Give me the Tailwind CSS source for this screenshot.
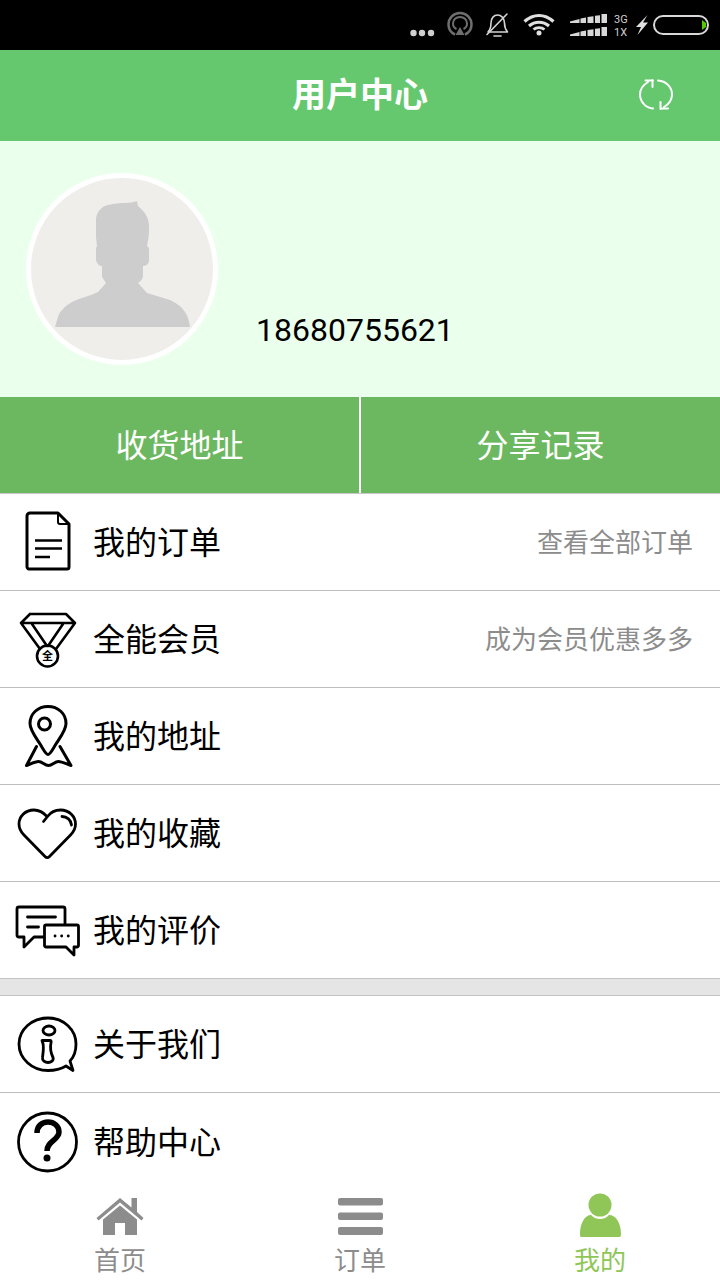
<!DOCTYPE html>
<html lang="zh">
<head>
<meta charset="utf-8">
<script src="https://cdn.jsdelivr.net/npm/@tailwindcss/browser@4"></script>
</head>
<body class="m-0">
<div class="w-[720px] h-[1280px] flex flex-col overflow-hidden bg-white font-['Noto_Sans_CJK_SC','Noto_Sans',sans-serif]">
  <!-- status bar -->
  <div class="h-[50px] bg-black flex justify-end shrink-0">
    <svg width="320" height="50" viewBox="400 0 320 50" fill="none">
      <g fill="#d0d0d0"><circle cx="413.500" cy="33" r="3.200"/><circle cx="422" cy="33" r="3.200"/><circle cx="431" cy="33" r="3.200"/></g>
      <path d="M455 34.500c-4-1.800-6.500-5.500-6.500-10 0-6.300 5-11.500 11.500-11.500s11.500 5.200 11.500 11.500c0 4.500-2.500 8.200-6.500 10" stroke="#6e6e6e" stroke-width="2.500"/>
      <path d="M456.500 29c-2-1-3.500-3-3.500-5.500 0-3.800 3-6.500 7-6.500s7 2.700 7 6.500c0 2.500-1.500 4.500-3.500 5.500" stroke="#6e6e6e" stroke-width="2"/>
      <path d="M455.500 35l4.500-8 4.500 8z" fill="#6e6e6e"/>
      <g stroke="#d4d4d4" stroke-width="1.600" stroke-linecap="round" stroke-linejoin="round">
        <path d="M488 32c3-3 3-6 3-9 0-5 3-8 6.500-8s7 3 7 8c0 3 .5 6 3 9z"/>
        <path d="M487 34.500L507 14"/>
        <path d="M494 36h7"/>
      </g>
      <g stroke="#e0e0e0" stroke-width="3.200" stroke-linecap="butt">
        <path d="M524.500 21.500c9-8 20-8 29 0"/>
        <path d="M529 26c6-5 14-5 20 0"/>
      </g>
      <path d="M533.500 29.500c3-2.500 8-2.500 11 0" stroke="#e0e0e0" stroke-width="2.800"/>
      <circle cx="539" cy="33" r="2.500" fill="#e0e0e0"/>
      <g fill="#d8d8d8">
        <path d="M570 21.500l9.500-2.500v4H570zM580.500 18.500l5.500-1V23h-5.500zM587.500 17l6-.8V23h-6zM595 15.800l5-.6V23h-5zM601.500 14h5.500v9h-5.500z"/>
        <path d="M570 34.500l9.500-2.500v4H570zM580.500 31.500l5.500-1V36h-5.500zM587.500 30l6-.8V36h-6zM595 28.800l5-.6V36h-5zM601.500 27h5.500v9h-5.500z"/>
      </g>
      <text x="614" y="23" font-size="11" fill="#cfcfcf" font-family="Roboto, sans-serif">3G</text>
      <text x="614" y="36" font-size="11" fill="#cfcfcf" font-family="Roboto, sans-serif">1X</text>
      <path d="M647.500 15l-11.500 12h5l-3.500 8 10.500-12.500h-5z" fill="#e0e0e0"/>
      <rect x="654" y="16" width="54" height="18" rx="9" stroke="#d8d8d8" stroke-width="2"/>
      <path d="M702 20l4 3v4l-4 3z" fill="#54c800"/>
    </svg>
  </div>

  <!-- header -->
  <div class="h-[91px] bg-[#66c86e] shrink-0 flex items-center relative">
    <div class="w-full text-center text-white text-[34px] font-bold leading-none mb-[5px]">用户中心</div>
    <svg class="absolute right-[46px] top-[27px]" width="36" height="36" viewBox="638 78 36 36" fill="none" stroke="#fff" stroke-width="2" stroke-linecap="round" stroke-linejoin="round">
      <path d="M648 83c-5 3-8 7-8 12.500 0 7.500 6 13.500 13 14"/>
      <path d="M645.500 81.500h7.500M652.500 81v7"/>
      <path d="M664 108c5-3 8-7 8-12.500 0-7.500-6-13.500-14-14"/>
      <path d="M661 109.500h7M660.500 110v-7"/>
    </svg>
  </div>

  <!-- profile -->
  <div class="h-[256px] bg-[#eaffec] shrink-0 flex items-start">
    <div class="ml-[26px] mt-[32px] w-[192px] h-[192px] rounded-full bg-[#efeeeb] border-[5px] border-white overflow-hidden shrink-0">
      <svg width="182" height="182" viewBox="31 178 182 182">
        <path fill="#cdcdcd" d="M137 201C131 203 126 203 120 203 112 204 106 205 103 207 98 211 96 215 96 220 96 227 96 232 96 237L97 246 96 248V260C97 264 99 266 102 266V277L106 283 98 292C90 296 80 298 72 302 64 307 60 311 58 317L55 327H190C189 321 188 316 185 312 181 306 176 303 170 300L147 293 138 283C141 281 143 279 143 275V266C147 266 149 263 149 260V248L147 246C148 241 149 236 149 230 149 225 149 221 147 217 145 212 141 209 138 206z"/>
      </svg>
    </div>
    <div class="ml-[38px] mt-[168px] text-[32px] leading-[42px] text-black font-['Roboto',sans-serif]">18680755621</div>
  </div>

  <!-- actions -->
  <div class="h-[96px] bg-[#6cb860] shrink-0 flex text-white text-[32px]">
    <div class="w-[359px] flex items-center justify-center border-r-2 border-white box-content pb-[4px]">收货地址</div>
    <div class="flex-1 flex items-center justify-center pb-[4px]">分享记录</div>
  </div>

  <!-- list -->
  <div class="flex-1 min-h-0 overflow-hidden border-t border-[#c8c8c8] text-[32px] text-black">
    <div class="h-[97px] border-b border-[#bdbdbd] flex items-center pr-[27px]">
      <svg width="94" height="96" viewBox="0 494 94 96" fill="none" stroke="#000" stroke-linecap="round" stroke-linejoin="round" class="shrink-0 -mr-[1px]">
        <path stroke-width="3" d="M30 513h28l11 11v43a2 2 0 0 1-2 2H30a2.500 2.500 0 0 1-3-2V516a3 3 0 0 1 3-3z"/>
        <path stroke-width="2" d="M58 513v9a2 2 0 0 0 2 2h9"/>
        <path stroke-width="2.600" stroke-linecap="butt" d="M35 540.500h27M35 548.500h27M35 557h15"/>
      </svg>
      <span class="flex-1 mb-[4px]">我的订单</span>
      <span class="text-[26px] text-[#8c8c8c] mb-[4px]">查看全部订单</span>
    </div>
    <div class="h-[97px] border-b border-[#bdbdbd] flex items-center pr-[27px]">
      <div class="relative w-[93px] h-[96px] shrink-0">
        <svg width="94" height="96" viewBox="0 591 94 96" fill="none" stroke="#000" stroke-width="2.600" stroke-linecap="round" stroke-linejoin="round">
          <path d="M30 614h36l9 9-19 26M30 614l-9 9 19 26M21 623h54M32 624l15 22M63 624l-15 22"/>
          <circle cx="47.500" cy="656" r="10.500"/>
        </svg>
        <span class="absolute left-[42px] top-[57px] text-[11px] leading-[15px] font-bold">全</span>
      </div>
      <span class="flex-1 mb-[4px]">全能会员</span>
      <span class="text-[26px] text-[#8c8c8c] mb-[4px]">成为会员优惠多多</span>
    </div>
    <div class="h-[97px] border-b border-[#bdbdbd] flex items-center">
      <svg width="94" height="96" viewBox="0 688 94 96" fill="none" stroke="#000" stroke-width="3" stroke-linecap="round" stroke-linejoin="round" class="shrink-0 -mr-[1px]">
        <path d="M48 754.500c-2 0-4-4-7-9-5-8-11-15-11-22 0-10 8-17 18-17s18 7 18 17c0 7-6 14-11 22-3 5-5 9-7 9z"/>
        <circle cx="44.500" cy="724" r="6"/>
        <path d="M36.500 746.500L26.500 765.500c5-2 9-4 12-4 4 0 6 4 10 4s6-4 10-4c3 0 7 2 12.500 4L60 746.500"/>
      </svg>
      <span class="mb-[4px]">我的地址</span>
    </div>
    <div class="h-[97px] border-b border-[#bdbdbd] flex items-center">
      <svg width="94" height="96" viewBox="0 785 94 96" fill="none" stroke="#000" stroke-width="2.800" stroke-linecap="round" stroke-linejoin="round" class="shrink-0 -mr-[1px]">
        <path d="M43.500 821.500l4-5c3-4 7-6.500 13-6.500 9 0 15 6.500 15 14 0 5-2 8-5 11l-21 21.500c-1.500 1.500-3 1.500-4.500 0l-21-21.500c-3-3-5-6-5-11 0-7.500 6-14 15-14 5 0 9 2 13 6.500"/>
        <path d="M62 816.500c5 0 9 3.500 9.500 8.500"/>
      </svg>
      <span class="mb-[4px]">我的收藏</span>
    </div>
    <div class="h-[97px] border-b border-[#c4c4c4] flex items-center">
      <svg width="94" height="96" viewBox="0 882 94 96" fill="none" stroke="#000" stroke-width="2.800" stroke-linecap="round" stroke-linejoin="round" class="shrink-0 -mr-[1px]">
        <path d="M43 937H34l-10 10v-10h-5a2 2 0 0 1-2-2v-26a2 2 0 0 1 2-2h44a2 2 0 0 1 2 2v15"/>
        <path d="M27.500 917h28M27.500 927h11"/>
        <path d="M46 925h31a1.500 1.500 0 0 1 1.500 1.500v19a1.500 1.500 0 0 1-1.500 1.500h-3v8l-8-8H46a1.500 1.500 0 0 1-1.500-1.500v-19A1.500 1.500 0 0 1 46 925z"/>
        <path stroke-width="2.800" stroke-dasharray="0.100 6.500" d="M55 936h14"/>
      </svg>
      <span class="mb-[4px]">我的评价</span>
    </div>
    <div class="h-[17px] bg-[#e5e5e5] border-b border-[#c4c4c4]"></div>
    <div class="h-[97px] border-b border-[#bdbdbd] flex items-center">
      <svg width="94" height="96" viewBox="0 996 94 96" fill="none" stroke="#000" stroke-width="2.800" stroke-linecap="round" stroke-linejoin="round" class="shrink-0 -mr-[1px]">
        <path d="M66 1066c-5 3-11 4.500-18 4.500-16 0-29-12-29-26.500s13-26 29-26 28 12 28 26c0 7-2 13-6 17l3 9.500z"/>
        <ellipse cx="49" cy="1030.500" rx="6" ry="4.500"/>
        <path d="M42 1040.500h8c1 0 1.500 1 1 2-1 5 0 11 2 15 1 3-2 5-5 5s-6-2-5.500-5c.5-5 1.500-9 .5-14-.5-1-1-3-1-3z"/>
      </svg>
      <span class="mb-[4px]">关于我们</span>
    </div>
    <div class="h-[97px] flex items-center">
      <svg width="94" height="96" viewBox="0 1093 94 96" fill="none" stroke="#000" class="shrink-0 -mr-[1px]">
        <circle cx="47.500" cy="1141" r="29" stroke-width="2.800"/>
        <path d="M37 1132c0-7 5-11 11-11s11 4 11 10c0 8-12 9-12 19" stroke-width="5.500" stroke-linecap="butt"/>
        <circle cx="47" cy="1157" r="3.500" fill="#000" stroke="none"/>
      </svg>
      <span class="mb-[4px]">帮助中心</span>
    </div>
  </div>

  <!-- tabs -->
  <div class="h-[100px] shrink-0 bg-white grid grid-cols-3 text-[26px] text-[#8c8c8c] leading-[38px]">
    <div class="flex flex-col items-center pt-[17px]">
      <svg width="48" height="40" viewBox="96 1197 48 40" fill="#8c8c8c" class="shrink-0">
        <path d="M120 1198l11.500 9.500V1198h5.500v14l6.500 6-2 2.500-21.500-18-21.500 18-2-2.500z"/>
        <path d="M120 1205.500l-17 14v15.500h12v-12h10v12h12v-15.500z"/>
      </svg>
      <span class="mt-[3px]">首页</span>
    </div>
    <div class="flex flex-col items-center pt-[17px]">
      <svg width="48" height="40" viewBox="336 1197 48 40" fill="#8c8c8c" class="shrink-0">
        <rect x="338" y="1198" width="45" height="7.500" rx="2"/>
        <rect x="338" y="1212.500" width="45" height="7.500" rx="2"/>
        <rect x="338" y="1227" width="45" height="8" rx="2"/>
      </svg>
      <span class="mt-[3px]">订单</span>
    </div>
    <div class="flex flex-col items-center pt-[17px] text-[#8fc657]">
      <svg width="48" height="44" viewBox="576 1193 48 44" fill="#8fc657" class="shrink-0 -mt-[4px]">
        <circle cx="600" cy="1205" r="11.500"/>
        <path d="M591 1215c3 3 6 4 9 4s6-1 9-4c7 0 12 8 12 19 0 3-2 5-5 5h-32c-3 0-4-2-4-5 0-11 5-19 11-19z"/>
      </svg>
      <span class="mt-[3px]">我的</span>
    </div>
  </div>
</div>
</body>
</html>
